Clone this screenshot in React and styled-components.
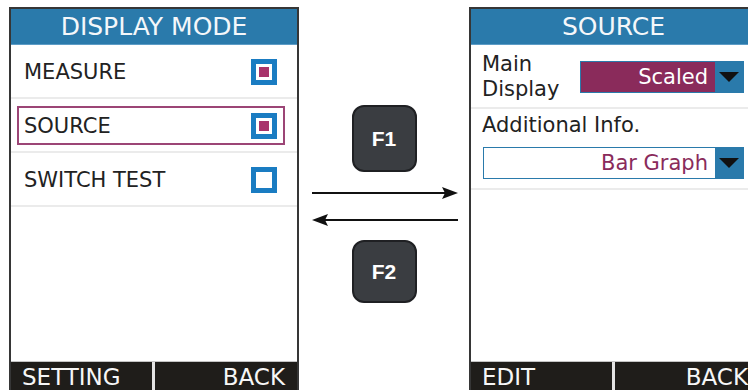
import React from "react";
import styled, { createGlobalStyle } from "styled-components";

const GlobalStyle = createGlobalStyle`
  html, body { margin: 0; padding: 0; background: #ffffff; }
  * { box-sizing: border-box; }
`;

const BLUE = "#2a7aab";
const MAGENTA = "#8a2b5b";

const Stage = styled.div`
  width: 748px;
  height: 390px;
  overflow: hidden;
  display: flex;
  align-items: flex-start;
  padding: 7px 0 0 9px;
  font-family: "DejaVu Sans", Verdana, sans-serif;
`;

const Panel = styled.div`
  flex-shrink: 0;
  width: ${(p) => p.$w}px;
  height: 387px;
  border: 2px solid #363636;
  display: flex;
  flex-direction: column;
  background: #fff;
`;

const Header = styled.div`
  height: 36px;
  flex-shrink: 0;
  background: ${BLUE};
  border-bottom: 1px solid #5d9cc6;
  color: #f4f7fa;
  font-size: 25px;
  line-height: 36px;
  text-align: center;
  padding-right: ${(p) => p.$shift || 0}px;
`;

const ListRow = styled.div`
  height: 54px;
  flex-shrink: 0;
  border-bottom: 2px solid #ebebeb;
  display: flex;
  padding: 7px 12px 6px 6px;
`;

const Item = styled.div`
  flex: 1;
  display: flex;
  align-items: center;
  justify-content: space-between;
  padding: 1px 6px 0 5px;
  border: 2px solid ${(p) => (p.$selected ? "#9c4576" : "transparent")};
  font-size: 21px;
  color: #222;
`;

const Check = styled.div`
  width: 26px;
  height: 26px;
  border: 5px solid #1a7cc2;
  padding: 3px;
  display: flex;
`;

const CheckDot = styled.div`
  flex: 1;
  background: #a8336b;
`;

const Spacer = styled.div`
  flex: 1;
`;

const SoftBar = styled.div`
  height: 31px;
  flex-shrink: 0;
  display: flex;
  gap: 3px;
  background: #e4e4e4;
  border-top: 1px solid #c4c4c4;
`;

const SoftKey = styled.div`
  ${(p) => (p.$first ? "width: 141px;" : "flex: 1;")}
  background: #1f1d1a;
  color: #f6f6f6;
  font-size: 23px;
  line-height: 30px;
  padding: 0 12px 0 11px;
  text-align: ${(p) => (p.$right ? "right" : "left")};
  white-space: nowrap;
`;

const Middle = styled.div`
  width: 170px;
  flex-shrink: 0;
  display: flex;
  flex-direction: column;
  align-items: center;
  padding-top: 98px;
`;

const FKey = styled.div`
  width: 65px;
  height: ${(p) => p.$h}px;
  margin-top: ${(p) => p.$mt || 0}px;
  background: #3a3d41;
  border: 2px solid #1f2023;
  border-radius: 12px;
  color: #ffffff;
  font-family: "Liberation Sans", Arial, sans-serif;
  font-weight: bold;
  font-size: 21px;
  display: flex;
  align-items: center;
  justify-content: center;
`;

const ArrowSvg = styled.svg`
  display: block;
  margin-top: ${(p) => p.$mt}px;
  margin-left: 2px;
`;

const FieldRow = styled.div`
  height: ${(p) => p.$h}px;
  flex-shrink: 0;
  border-bottom: 2px solid #ebebeb;
  display: flex;
  flex-direction: ${(p) => (p.$column ? "column" : "row")};
  align-items: ${(p) => (p.$column ? "stretch" : "center")};
  padding: ${(p) => p.$pad};
`;

const Label = styled.div`
  font-size: 21px;
  line-height: 25px;
  color: #222;
  width: ${(p) => (p.$w ? `${p.$w}px` : "auto")};
  flex-shrink: 0;
`;

const Dropdown = styled.div`
  display: flex;
  height: 32px;
  width: ${(p) => (p.$wide ? "auto" : "164px")};
  margin: ${(p) => p.$margin || 0};
  border: 1px solid ${BLUE};
  background: ${(p) => (p.$filled ? MAGENTA : "#ffffff")};
`;

const DropValue = styled.div`
  flex: 1;
  text-align: right;
  padding-right: 7px;
  font-size: 21px;
  line-height: 30px;
  color: ${(p) => (p.$filled ? "#ffffff" : MAGENTA)};
`;

const DropButton = styled.div`
  width: 28px;
  background: ${BLUE};
  display: flex;
  align-items: center;
  justify-content: center;
`;

const Triangle = styled.div`
  width: 0;
  height: 0;
  border-left: 10px solid transparent;
  border-right: 10px solid transparent;
  border-top: 10px solid #111;
`;

function Arrow({ dir, mt }) {
  const right = dir === "right";
  return (
    <ArrowSvg $mt={mt} width="146" height="12" viewBox="0 0 146 12">
      {right ? (
        <>
          <line x1="0" y1="6" x2="134" y2="6" stroke="#111" strokeWidth="2" />
          <polygon points="130,0 146,6 130,12 133,6" fill="#111" />
        </>
      ) : (
        <>
          <line x1="12" y1="6" x2="146" y2="6" stroke="#111" strokeWidth="2" />
          <polygon points="16,0 0,6 16,12 13,6" fill="#111" />
        </>
      )}
    </ArrowSvg>
  );
}

function Select({ value, filled, wide, margin }) {
  return (
    <Dropdown $filled={filled} $wide={wide} $margin={margin}>
      <DropValue $filled={filled}>{value}</DropValue>
      <DropButton>
        <Triangle />
      </DropButton>
    </Dropdown>
  );
}

const items = [
  { label: "MEASURE", checked: true },
  { label: "SOURCE", checked: true, selected: true },
  { label: "SWITCH TEST", checked: false },
];

export default function App() {
  return (
    <>
      <GlobalStyle />
      <Stage>
        <Panel $w={290}>
          <Header>DISPLAY MODE</Header>
          {items.map((it) => (
            <ListRow key={it.label}>
              <Item $selected={it.selected}>
                <span>{it.label}</span>
                <Check>{it.checked ? <CheckDot /> : null}</Check>
              </Item>
            </ListRow>
          ))}
          <Spacer />
          <SoftBar>
            <SoftKey $first>SETTING</SoftKey>
            <SoftKey $right>BACK</SoftKey>
          </SoftBar>
        </Panel>

        <Middle>
          <FKey $h={67}>F1</FKey>
          <Arrow dir="right" mt={15} />
          <Arrow dir="left" mt={15} />
          <FKey $h={63} $mt={14}>F2</FKey>
        </Middle>

        <Panel $w={293}>
          <Header $shift={4}>SOURCE</Header>
          <FieldRow $h={64} $pad="2px 16px 0 11px">
            <Label $w={98}>
              Main
              <br />
              Display
            </Label>
            <Select value="Scaled" filled />
          </FieldRow>
          <FieldRow $h={81} $column $pad="4px 16px 0 11px">
            <Label>Additional Info.</Label>
            <Select value="Bar Graph" wide margin="9px 0 0 1px" />
          </FieldRow>
          <Spacer />
          <SoftBar>
            <SoftKey $first>EDIT</SoftKey>
            <SoftKey $right>BACK</SoftKey>
          </SoftBar>
        </Panel>
      </Stage>
    </>
  );
}
